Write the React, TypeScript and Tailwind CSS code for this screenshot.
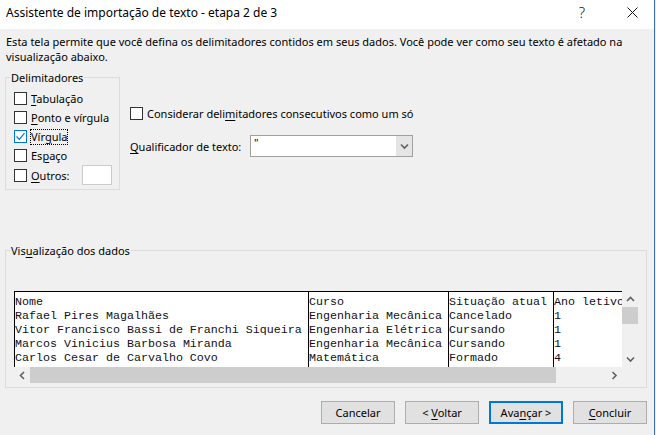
import type { ReactNode } from 'react';

const ui = "font-['Segoe_UI','Noto_Sans','Liberation_Sans',sans-serif]";
const mono = "font-['Liberation_Mono','Courier_New',monospace]";

const rows = [
  ['Nome', 'Curso', 'Situação atual', 'Ano letivo'],
  ['Rafael Pires Magalhães', 'Engenharia Mecânica', 'Cancelado', '1'],
  ['Vitor Francisco Bassi de Franchi Siqueira', 'Engenharia Elétrica', 'Cursando', '1'],
  ['Marcos Vinicius Barbosa Miranda', 'Engenharia Mecânica', 'Cursando', '1'],
  ['Carlos Cesar de Carvalho Covo', 'Matemática', 'Formado', '4'],
];

const colWidths = ['w-[294px]', 'w-[140px]', 'w-[105px]', 'flex-1'];

function Box({ checked = false }: { checked?: boolean }) {
  return (
    <span
      className={`w-[13px] h-[13px] shrink-0 border bg-white flex items-center justify-center ${checked ? 'border-[#0078d7]' : 'border-[#333333]'}`}
    >
      {checked && (
        <svg width="11" height="11" viewBox="0 0 11 11" fill="none">
          <path d="M1.5 5.5 L4.3 8.3 L9.5 2.2" stroke="#0078d7" strokeWidth="1.2" />
        </svg>
      )}
    </span>
  );
}

function Key({ children }: { children: ReactNode }) {
  return <span className="underline underline-offset-[2px]">{children}</span>;
}

function Chevron({ dir }: { dir: 'up' | 'down' | 'left' | 'right' }) {
  const d = {
    up: 'M1 5 L4.5 1.5 L8 5',
    down: 'M1 1.5 L4.5 5 L8 1.5',
    left: 'M5 1 L1.5 4.5 L5 8',
    right: 'M1.5 1 L5 4.5 L1.5 8',
  }[dir];
  const w = dir === 'up' || dir === 'down' ? 9 : 7;
  const h = dir === 'up' || dir === 'down' ? 7 : 9;
  return (
    <svg width={w} height={h} viewBox={`0 0 ${w} ${h}`} fill="none">
      <path d={d} stroke="#606060" strokeWidth="1.6" />
    </svg>
  );
}

function Button({ children, primary = false }: { children: ReactNode; primary?: boolean }) {
  return (
    <div
      className={`w-[74px] h-[23px] flex items-center justify-center bg-[#e1e1e1] text-black ${primary ? 'border-2 border-[#0078d7]' : 'border border-[#adadad]'}`}
    >
      <span>{children}</span>
    </div>
  );
}

export default function App() {
  return (
    <div className={`w-[656px] h-[435px] flex bg-white ${ui} text-[11px] leading-[15px] text-black overflow-hidden`}>
      <div className="w-[654px] flex flex-col">
        {/* title bar */}
        <div className="h-[29px] bg-white flex items-center">
          <span className="ml-[6px] -mt-[5px] text-[12px]">Assistente de importação de texto - etapa 2 de 3</span>
          <span className="ml-auto -mt-[5px] text-[15px] font-light text-[#222]">?</span>
          <svg className="ml-[42px] mr-[16px] -mt-[5px]" width="11" height="11" viewBox="0 0 11 11">
            <path d="M0.5 0.5 L10.5 10.5 M10.5 0.5 L0.5 10.5" stroke="#111" strokeWidth="1" />
          </svg>
        </div>

        <div className="flex-1 bg-[#f0f0f0] flex flex-col">
          <p className="pl-[6px] pt-[5px] pr-[20px] whitespace-nowrap">
            Esta tela permite que você defina os delimitadores contidos em seus dados. Você pode ver como seu texto é afetado na
            <br />
            visualização abaixo.
          </p>

          <div className="flex mt-[6px]">
            <fieldset className="ml-[5px] w-[115px] border border-[#dcdcdc] pl-[4px] pb-[4px]">
              <legend className="px-[1px]">Delimitadores</legend>
              <div className="flex flex-col ml-[4px] mt-[4px]">
                <label className="h-[19px] flex items-center gap-[4px]">
                  <Box />
                  <span><Key>T</Key>abulação</span>
                </label>
                <label className="h-[19px] flex items-center gap-[4px]">
                  <Box />
                  <span><Key>P</Key>onto e vírgula</span>
                </label>
                <label className="h-[19px] flex items-center gap-[3px]">
                  <Box checked />
                  <span className="border border-dotted border-black px-[0px] leading-[14px]">Vír<Key>g</Key>ula</span>
                </label>
                <label className="h-[19px] flex items-center gap-[4px]">
                  <Box />
                  <span>Es<Key>p</Key>aço</span>
                </label>
                <label className="h-[20px] flex items-center gap-[4px] pr-[7px]">
                  <Box />
                  <span><Key>O</Key>utros:</span>
                  <span className="ml-auto w-[30px] h-[20px] bg-white border border-[#cccccc]"></span>
                </label>
              </div>
            </fieldset>

            <div className="ml-[10px] pt-[36px] flex flex-col">
              <label className="flex items-center gap-[4px]">
                <Box />
                <span>Considerar deli<Key>m</Key>itadores consecutivos como um só</span>
              </label>
              <div className="flex items-center mt-[14px]">
                <span className="w-[120px] whitespace-nowrap"><Key>Q</Key>ualificador de texto:</span>
                <div className="w-[163px] h-[22px] border border-[#a0a0a0] bg-white flex">
                  <span className="flex-1 pl-[3px] leading-[14px]">"</span>
                  <span className="w-[16px] bg-[#e5e5e5] flex items-center justify-center">
                    <Chevron dir="down" />
                  </span>
                </div>
              </div>
            </div>
          </div>

          <fieldset className="ml-[5px] mt-[53px] w-[642px] border border-[#dcdcdc] pl-[4px] pb-[4px]">
            <legend className="px-[1px]">Vis<Key>u</Key>alização dos dados</legend>
            <div className="ml-[4px] mt-[33px] w-[624px] h-[92px] flex flex-col">
              <div className="flex h-[76px]">
                <div className={`w-[608px] bg-white border-t border-l border-black flex ${mono} text-[11.67px] leading-[14px] text-[#101020] overflow-hidden`}>
                  {[0, 1, 2, 3].map((c) => (
                    <div
                      key={c}
                      className={`${colWidths[c]} shrink-0 pt-[3px] whitespace-pre overflow-hidden ${c < 3 ? 'border-r border-black' : ''}`}
                    >
                      {rows.map((r, i) => (
                        <div key={i}>{r[c]}</div>
                      ))}
                    </div>
                  ))}
                </div>
                <div className="w-[16px] flex flex-col items-center">
                  <span className="h-[16px] flex items-center justify-center"><Chevron dir="up" /></span>
                  <span className="w-[16px] h-[17px] bg-[#cdcdcd]"></span>
                  <span className="flex-1"></span>
                  <span className="h-[16px] flex items-center justify-center"><Chevron dir="down" /></span>
                </div>
              </div>
              <div className="flex h-[16px]">
                <span className="w-[16px] flex items-center justify-center"><Chevron dir="left" /></span>
                <span className="w-[526px] bg-[#cdcdcd]"></span>
                <span className="flex-1"></span>
                <span className="w-[16px] flex items-center justify-center"><Chevron dir="right" /></span>
                <span className="w-[16px]"></span>
              </div>
            </div>
          </fieldset>

          <div className="flex justify-end gap-[10px] mt-[13px] mr-[7px]">
            <Button>Cancelar</Button>
            <Button>&lt; <Key>V</Key>oltar</Button>
            <Button primary>Ava<Key>n</Key>çar &gt;</Button>
            <Button><Key>C</Key>oncluir</Button>
          </div>
        </div>
      </div>
      <div className="w-[1px] bg-[#3b6cb0]"></div>
      <div className="w-[1px] bg-[#f0f0f0]"></div>
    </div>
  );
}
